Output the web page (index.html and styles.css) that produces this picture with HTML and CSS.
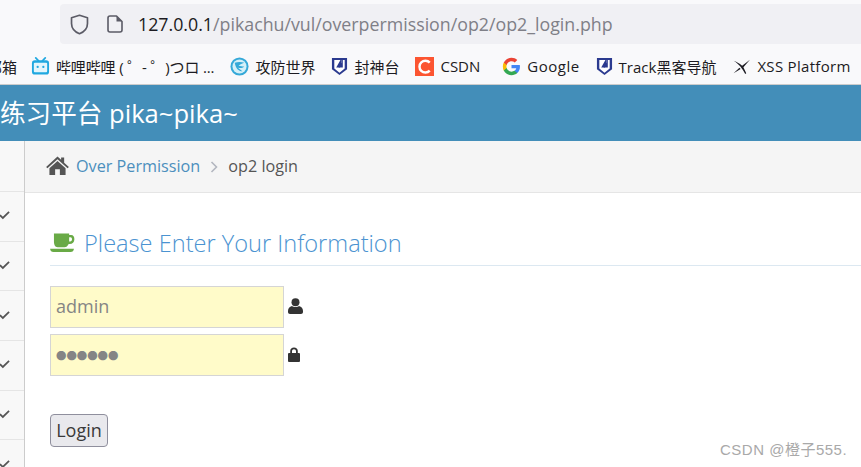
FILE: index.html
```html
<!DOCTYPE html>
<html lang="zh-CN">
<head>
    <meta charset="UTF-8">
    <title>op2 login</title>
    <link rel="stylesheet" href="styles.css">
</head>
<body>
    <div class="toolbar">
        <div class="url-bar">
            <svg class="url-icon shield" viewBox="0 0 18 20"><path d="M9 1.2 L16.6 3.6 V9 C16.6 13.6 13.4 17 9 18.8 C4.6 17 1.4 13.6 1.4 9 V3.6 Z" fill="none" stroke="#5b5b66" stroke-width="1.6" stroke-linejoin="round"/></svg>
            <svg class="url-icon doc" viewBox="0 0 16 18"><path d="M3 1 H9.5 L15 6.5 V15 A2 2 0 0 1 13 17 H3 A2 2 0 0 1 1 15 V3 A2 2 0 0 1 3 1 Z" fill="none" stroke="#5b5b66" stroke-width="1.6" stroke-linejoin="round"/><path d="M9.5 1 V6.5 H15 Z" fill="#5b5b66"/></svg>
            <span class="url-text"><span class="url-host">127.0.0.1</span>/pikachu/vul/overpermission/op2/op2_login.php</span>
        </div>
        <div class="bookmarks">
            <span class="bookmark first">邮箱</span>
            <span class="bookmark bm-bili">
                <svg class="bm-icon" viewBox="0 0 20 20"><path d="M5 1 L8 4 M15 1 L12 4" stroke="#20a8e0" stroke-width="1.8" stroke-linecap="round"/><rect x="1" y="3.5" width="18" height="15" rx="3" fill="#20a8e0"/><rect x="3" y="6" width="14" height="10" rx="1" fill="#e4f6fc"/><circle cx="7" cy="10.5" r="1.2" fill="#20a8e0"/><circle cx="13" cy="10.5" r="1.2" fill="#20a8e0"/></svg>
                <span class="bm-label">哔哩哔哩 ( ゜- ゜)つロ ...</span>
            </span>
            <span class="bookmark">
                <svg class="bm-icon" viewBox="0 0 20 20"><circle cx="10" cy="10" r="9.5" fill="#35a9d8"/><circle cx="10" cy="10" r="7.4" fill="#d5f0f8"/><path d="M5 6 C8 5 12 5 15 6 C12 7 10 8 9 9 C11 10 13 10 15 10 C13 12 10 12 8 11 L13 15 C9 15 6 12 5 6 Z" fill="#35a9d8"/></svg>
                攻防世界
            </span>
            <span class="bookmark">
                <svg class="bm-icon shield-bm" viewBox="0 0 18 20"><path d="M1 1 H17 V13 L9 19 L1 13 Z" fill="#2b3a8f"/><path d="M3.5 3.2 H10 L5.5 11 H9.5 L11 8 V3.2 H14.5 V12 L9 16.5 L3.5 12 Z" fill="#fff"/><path d="M11 3.2 H12.5 V11 H8 L11 6 Z" fill="#2b3a8f"/></svg>
                封神台
            </span>
            <span class="bookmark bm-csdn">
                <svg class="bm-icon" viewBox="0 0 20 20"><rect width="20" height="20" fill="#fc5531"/><path d="M15.5 6 A6.2 6.2 0 1 0 15.5 14.4" fill="none" stroke="#fff" stroke-width="2.6"/></svg>
                CSDN
            </span>
            <span class="bookmark bm-google">
                <svg class="bm-icon" viewBox="0 0 18 18"><path d="M17 9.2 C17 8.6 17 8 16.8 7.5 H9 V10.6 H13.5 C13.3 11.7 12.7 12.5 11.8 13.1 V15.2 H14.5 C16.1 13.7 17 11.7 17 9.2 Z" fill="#4285f4"/><path d="M9 17.2 C11.2 17.2 13 16.5 14.5 15.2 L11.8 13.1 C11.1 13.6 10.1 13.9 9 13.9 C6.9 13.9 5.1 12.5 4.4 10.5 H1.7 V12.7 C3.1 15.4 5.8 17.2 9 17.2 Z" fill="#34a853"/><path d="M4.4 10.5 C4.1 9.6 4.1 8.4 4.4 7.5 V5.3 H1.7 C0.5 7.5 0.5 10.5 1.7 12.7 Z" fill="#fbbc05"/><path d="M9 4.1 C10.2 4.1 11.2 4.5 12.1 5.3 L14.5 2.9 C13 1.5 11.2 0.8 9 0.8 C5.8 0.8 3.1 2.6 1.7 5.3 L4.4 7.5 C5.1 5.5 6.9 4.1 9 4.1 Z" fill="#ea4335"/></svg>
                <span class="bm-label">Google</span>
            </span>
            <span class="bookmark">
                <svg class="bm-icon shield-bm" viewBox="0 0 18 20"><path d="M1 1 H17 V13 L9 19 L1 13 Z" fill="#2b3a8f"/><path d="M3.5 3.2 H10 L5.5 11 H9.5 L11 8 V3.2 H14.5 V12 L9 16.5 L3.5 12 Z" fill="#fff"/><path d="M11 3.2 H12.5 V11 H8 L11 6 Z" fill="#2b3a8f"/></svg>
                Track黑客导航
            </span>
            <span class="bookmark bm-xss">
                <svg class="bm-icon" viewBox="0 0 18 18"><path d="M1.5 3.5 C6 6 10 11 12.5 16 L13.5 15.5 L10.8 9.8 L17 2.5 L9.6 8.2 C7 6 4 4.2 1.5 3.5 Z M1.5 15.5 L7 10.2 L8.2 11.4 Z" fill="#1c1b22"/></svg>
                <span class="bm-label">XSS Platform</span>
            </span>
        </div>
    </div>

    <div class="navbar"><span class="brand">练习平台 pika~pika~</span></div>

    <div class="main">
        <div class="sidebar">
            <div class="side-top"></div>
            <div class="side-item"><svg class="check" viewBox="0 0 12 10"><path d="M1 5.2 L4.2 8.2 L11 1.6" fill="none" stroke="#555" stroke-width="1.9"/></svg></div>
            <div class="side-item"><svg class="check" viewBox="0 0 12 10"><path d="M1 5.2 L4.2 8.2 L11 1.6" fill="none" stroke="#555" stroke-width="1.9"/></svg></div>
            <div class="side-item"><svg class="check" viewBox="0 0 12 10"><path d="M1 5.2 L4.2 8.2 L11 1.6" fill="none" stroke="#555" stroke-width="1.9"/></svg></div>
            <div class="side-item"><svg class="check" viewBox="0 0 12 10"><path d="M1 5.2 L4.2 8.2 L11 1.6" fill="none" stroke="#555" stroke-width="1.9"/></svg></div>
            <div class="side-item"><svg class="check" viewBox="0 0 12 10"><path d="M1 5.2 L4.2 8.2 L11 1.6" fill="none" stroke="#555" stroke-width="1.9"/></svg></div>
            <div class="side-item"><svg class="check" viewBox="0 0 12 10"><path d="M1 5.2 L4.2 8.2 L11 1.6" fill="none" stroke="#555" stroke-width="1.9"/></svg></div>
        </div>

        <div class="content">
            <div class="breadcrumbs">
                <svg class="home-icon" viewBox="0 0 24 20"><path d="M12 0.5 L15.8 4 V1.5 H19 V7 L24 11.6 L22.6 13 L12 3.4 L1.4 13 L0 11.6 Z" fill="#555"/><path d="M12 5.2 L20.5 12.8 V20 H14.5 V14 H9.5 V20 H3.5 V12.8 Z" fill="#555"/></svg>
                <a class="crumb-link">Over Permission</a>
                <svg class="crumb-sep" viewBox="0 0 8 12"><path d="M1.5 1 L6.5 6 L1.5 11" fill="none" stroke="#b2b6bf" stroke-width="1.6"/></svg>
                <span class="crumb-current">op2 login</span>
            </div>

            <div class="page-body">
                <h2 class="page-title">
                    <svg class="coffee-icon" viewBox="0 0 26 20"><path d="M4 0.5 H20 V2 H22 C24.5 2 25.5 4 25.5 6.5 C25.5 9.5 23.5 11.5 20.5 11.5 H19.5 C18.5 13.5 17 15 15 15 H8 C5 15 4 12 4 9 Z M20 4.5 V9 H21 C22.5 9 23 8 23 6.7 C23 5.4 22.5 4.5 21.2 4.5 Z" fill="#69aa46"/><path d="M0 16.5 H25 C25 18.5 23.5 20 21.5 20 H3.5 C1.5 20 0 18.5 0 16.5 Z" fill="#69aa46"/></svg>
                    Please Enter Your Information
                </h2>

                <form class="login-form">
                    <div class="field">
                        <input class="text-input" type="text" value="admin">
                        <svg class="field-icon user-icon" viewBox="0 0 15 16"><circle cx="7.5" cy="4.2" r="4" fill="#333"/><path d="M4 8 C5.5 9.4 9.5 9.4 11 8 C13.5 8.5 15 10.5 15 13 V14 C15 15.2 14.2 16 13 16 H2 C0.8 16 0 15.2 0 14 V13 C0 10.5 1.5 8.5 4 8 Z" fill="#333"/></svg>
                    </div>
                    <div class="field">
                        <input class="text-input pass-input" type="text" value="●●●●●●">
                        <svg class="field-icon lock-icon" viewBox="0 0 12 15"><path d="M2.2 6 V4 C2.2 1.8 3.8 0.4 6 0.4 C8.2 0.4 9.8 1.8 9.8 4 V6 H8 V4.2 C8 3 7.2 2.2 6 2.2 C4.8 2.2 4 3 4 4.2 V6 Z" fill="#333"/><rect y="6" width="12" height="9" rx="1" fill="#333"/></svg>
                    </div>
                    <button class="login-btn" type="button">Login</button>
                </form>
            </div>
        </div>
    </div>

    <div class="watermark">CSDN @橙子555.</div>
</body>
</html>
```

FILE: styles.css
```css
* {
    box-sizing: border-box;
    margin: 0;
    padding: 0;
}

html, body {
    height: 467px;
    overflow: hidden;
}

body {
    position: relative;
    font-family: 'Open Sans', 'Noto Sans CJK SC', sans-serif;
    background: white;
    color: #393939;
}

/* browser chrome */
.toolbar {
    height: 85px;
    background-color: #f9f9fb;
    border-bottom: 1px solid #ccc;
    padding-top: 4px;
}

.url-bar {
    height: 40px;
    margin-left: 60px;
    background-color: #f0f0f4;
    border-radius: 4px 0 0 4px;
    display: flex;
    align-items: center;
}

.url-icon {
    flex: none;
}

.shield {
    width: 19px;
    height: 21px;
    margin-left: 10px;
}

.doc {
    width: 16px;
    height: 18px;
    margin-left: 18px;
}

.url-text {
    margin-left: 15px;
    font-size: 17.8px;
    color: #7f7f87;
    white-space: nowrap;
}

.url-host {
    color: #1c1b22;
}

.bookmarks {
    height: 40px;
    padding-top: 4px;
    display: flex;
    align-items: center;
    gap: 16px;
    white-space: nowrap;
    overflow: hidden;
}

.bookmark {
    display: flex;
    align-items: center;
    gap: 6px;
    font-size: 15px;
    color: #1c1b22;
}

.bookmark.first {
    margin-left: -13px;
    margin-right: -2px;
}

.bm-bili .bm-label {
    letter-spacing: -0.15px;
}

.bm-csdn {
    margin-right: 6px;
}

.bm-google .bm-label {
    letter-spacing: 0.5px;
}

.bm-xss .bm-label {
    letter-spacing: 0.3px;
}

.bm-icon {
    width: 19px;
    height: 19px;
    flex: none;
}

.shield-bm {
    width: 17px;
}

/* pikachu page */
.navbar {
    height: 56px;
    padding-bottom: 3px;
    background-color: #438eb9;
    display: flex;
    align-items: center;
    overflow: hidden;
}

.brand {
    color: white;
    font-size: 25.6px;
    white-space: nowrap;
}

.main {
    display: flex;
    height: 326px;
}

.sidebar {
    width: 25px;
    flex: none;
    background-color: #f8f8f8;
    border-right: 1px solid #ccc;
}

.side-top {
    height: 51px;
    border-bottom: 1px solid #e5e5e5;
}

.side-item {
    height: 49.7px;
    padding-bottom: 2px;
    border-bottom: 1px solid #e5e5e5;
    display: flex;
    align-items: center;
}

.check {
    width: 11px;
    height: 10px;
    margin-left: -1px;
}

.content {
    flex: 1;
    min-width: 0;
}

.breadcrumbs {
    height: 52px;
    padding-bottom: 2px;
    background-color: #f5f5f5;
    border-bottom: 1px solid #e5e5e5;
    display: flex;
    align-items: center;
    padding-left: 21px;
    font-size: 16.2px;
}

.home-icon {
    width: 23px;
    height: 19px;
    margin-right: 7px;
}

.crumb-link {
    color: #4c8fbd;
}

.crumb-sep {
    width: 8px;
    height: 12px;
    margin: 2px 10px 0 10px;
}

.crumb-current {
    color: #555;
}

.page-body {
    padding: 36px 0 0 25px;
}

.page-title {
    display: flex;
    align-items: center;
    gap: 9px;
    height: 37px;
    padding-bottom: 8px;
    font-size: 23.6px;
    font-weight: 300;
    color: #4b93d1;
    border-bottom: 1px solid #dce8f1;
}

.coffee-icon {
    width: 25px;
    height: 19px;
    margin-top: -1px;
}

.login-form {
    padding-top: 20px;
}

.field {
    display: flex;
    align-items: center;
    gap: 4px;
    margin-bottom: 6px;
}

.text-input {
    width: 234px;
    height: 42px;
    padding: 0 0 2px 5px;
    background-color: #fffbc9;
    border: 1px solid #d5d5d5;
    font-family: inherit;
    font-size: 18px;
    color: #858585;
}

.pass-input {
    font-size: 10.4px;
    padding-bottom: 0;
}

.field-icon {
    flex: none;
}

.user-icon {
    width: 15px;
    height: 16px;
    margin-bottom: 3px;
}

.lock-icon {
    width: 12px;
    height: 15px;
    margin-bottom: 1px;
}

.login-btn {
    display: block;
    margin-top: 38px;
    width: 58px;
    height: 33px;
    padding-bottom: 2px;
    background-color: #e9e9ed;
    border: 1px solid #8f8f9d;
    border-radius: 4px;
    font-family: inherit;
    font-size: 18px;
    color: #393939;
}

.watermark {
    position: absolute;
    left: 720px;
    top: 438px;
    font-family: 'Liberation Sans', 'Noto Sans CJK SC', sans-serif;
    font-size: 15px;
    letter-spacing: 0.5px;
    color: #a9a9a9;
    white-space: nowrap;
}
```
